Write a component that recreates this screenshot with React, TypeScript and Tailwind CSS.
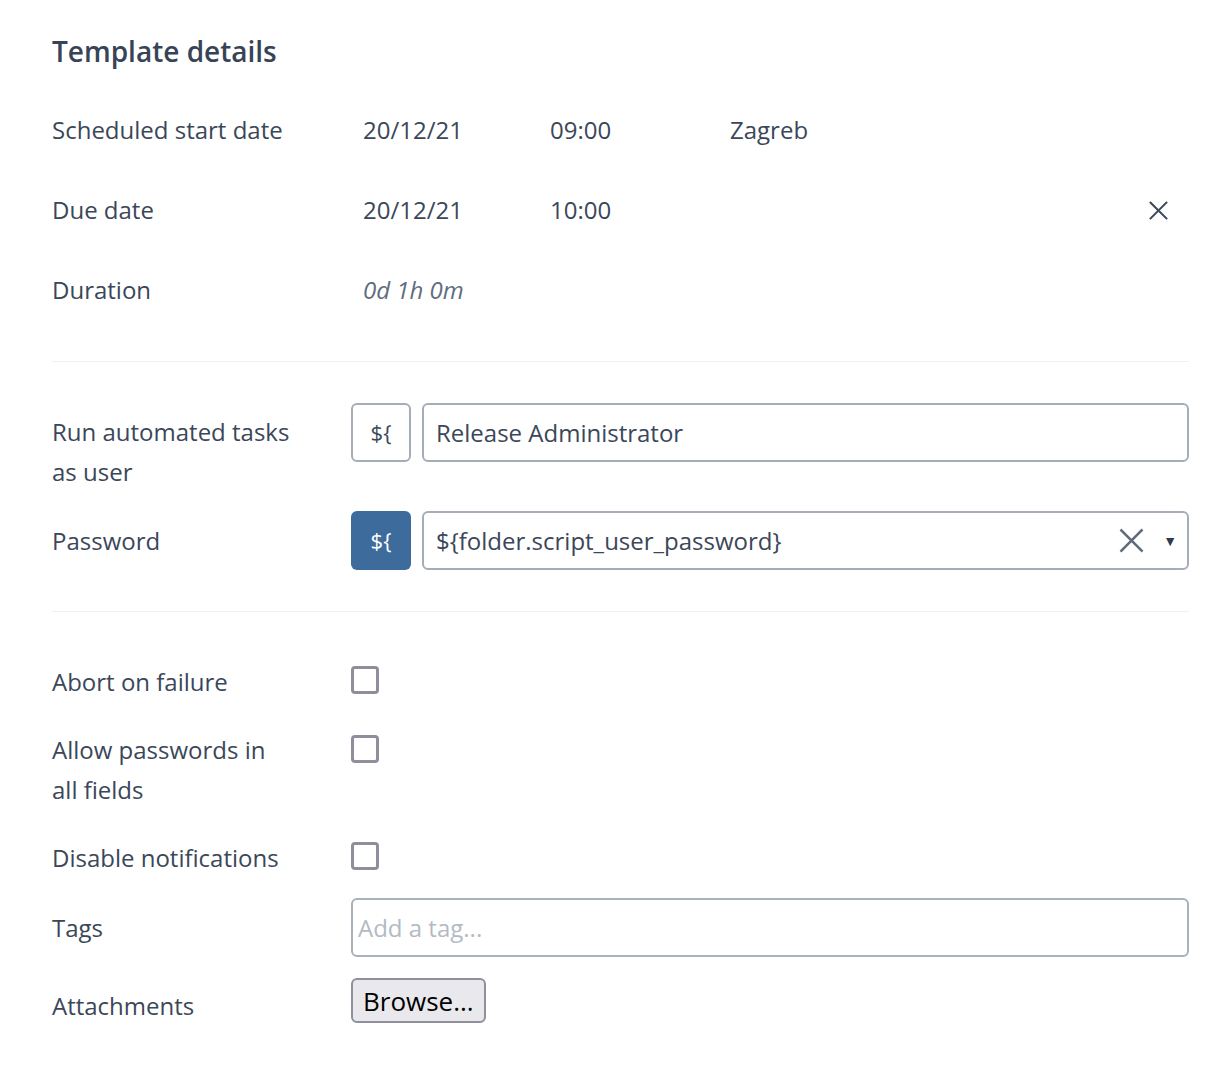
import React from "react";

const TEXT = "text-[#3b4759]";

function XIcon({ size, stroke, color }: { size: number; stroke: number; color: string }) {
  return (
    <svg width={size} height={size} viewBox="0 0 24 24" fill="none" stroke={color} strokeWidth={stroke} strokeLinecap="square">
      <path d="M3 3L21 21M21 3L3 21" />
    </svg>
  );
}

function Checkbox() {
  return <span className="block w-[28px] h-[28px] border-[3px] border-[#8f8e9c] rounded-[4px] bg-white" />;
}

function Divider() {
  return <div className="h-px bg-[#eef0f2]" />;
}

export default function App() {
  return (
    <div
      className={`w-[1218px] h-[1072px] bg-white pl-[52px] pr-[29px] pt-[33px] ${TEXT} text-[24px]`}
      style={{ fontFamily: '"Open Sans", "Noto Sans", sans-serif' }}
    >
      <h2 className="text-[28px] leading-[36px] font-semibold text-[#374457]">Template details</h2>

      {/* dates */}
      <div className="mt-[21px]">
        <div className="flex items-center h-[80px]">
          <div className="w-[311px]">Scheduled start date</div>
          <div className="w-[187px]">20/12/21</div>
          <div className="w-[180px]">09:00</div>
          <div>Zagreb</div>
        </div>
        <div className="flex items-center h-[80px]">
          <div className="w-[311px]">Due date</div>
          <div className="w-[187px]">20/12/21</div>
          <div>10:00</div>
          <button className="ml-auto mr-[20px] p-0">
            <XIcon size={21} stroke={2.4} color="#3b4759" />
          </button>
        </div>
        <div className="flex items-center h-[80px]">
          <div className="w-[311px]">Duration</div>
          <div className="italic text-[#5f6d80]">0d 1h 0m</div>
        </div>
      </div>

      <div className="mt-[31px]">
        <Divider />
      </div>

      {/* automation user */}
      <div className="mt-[41px] flex items-start">
        <div className="w-[299px] pr-[55px] pt-[9px] leading-[40px]">Run automated tasks as user</div>
        <div className="flex-1 flex gap-[11px]">
          <button className="w-[60px] h-[59px] shrink-0 border-2 border-[#a5adb8] rounded-[6px] bg-white text-[22px]">${"{"}</button>
          <div className="flex-1 h-[59px] border-2 border-[#a5adb8] rounded-[6px] flex items-center pl-[12px]">
            Release Administrator
          </div>
        </div>
      </div>

      <div className="mt-[19px] flex items-center">
        <div className="w-[299px] leading-[40px]">Password</div>
        <div className="flex-1 flex gap-[11px]">
          <button className="w-[60px] h-[59px] shrink-0 rounded-[6px] bg-[#3d6b9c] text-white text-[22px]">${"{"}</button>
          <div className="flex-1 h-[59px] border-2 border-[#a5adb8] rounded-[6px] flex items-center pl-[12px] pr-[10px]">
            <span className="flex-1">${"{folder.script_user_password}"}</span>
            <XIcon size={27} stroke={2.2} color="#5f6b7a" />
            <span className="ml-[18px] text-[14px] text-[#2f3b4c]">▼</span>
          </div>
        </div>
      </div>

      <div className="mt-[41px]">
        <Divider />
      </div>

      {/* options */}
      <div className="mt-[50px] flex items-center h-[40px]">
        <div className="w-[299px]">Abort on failure</div>
        <div className="-mt-[4px]">
          <Checkbox />
        </div>
      </div>

      <div className="mt-[28px] flex items-start">
        <div className="w-[299px] pr-[55px] leading-[40px]">Allow passwords in all fields</div>
        <div className="mt-[5px]">
          <Checkbox />
        </div>
      </div>

      <div className="mt-[28px] flex items-center h-[40px]">
        <div className="w-[299px]">Disable notifications</div>
        <div className="-mt-[4px]">
          <Checkbox />
        </div>
      </div>

      <div className="mt-[20px] flex items-center">
        <div className="w-[299px]">Tags</div>
        <input
          placeholder="Add a tag..."
          className="flex-1 h-[59px] border-2 border-[#a9b1bb] rounded-[6px] px-[5px] outline-none placeholder:text-[#b4bac3]"
        />
      </div>

      <div className="mt-[21px] flex items-start">
        <div className="w-[299px] pt-[8px] leading-[40px]">Attachments</div>
        <button className="h-[45px] px-[10px] bg-[#e9e9ed] border-2 border-[#8f8f9d] rounded-[6px] text-black text-[26px] leading-none">
          Browse...
        </button>
      </div>
    </div>
  );
}
